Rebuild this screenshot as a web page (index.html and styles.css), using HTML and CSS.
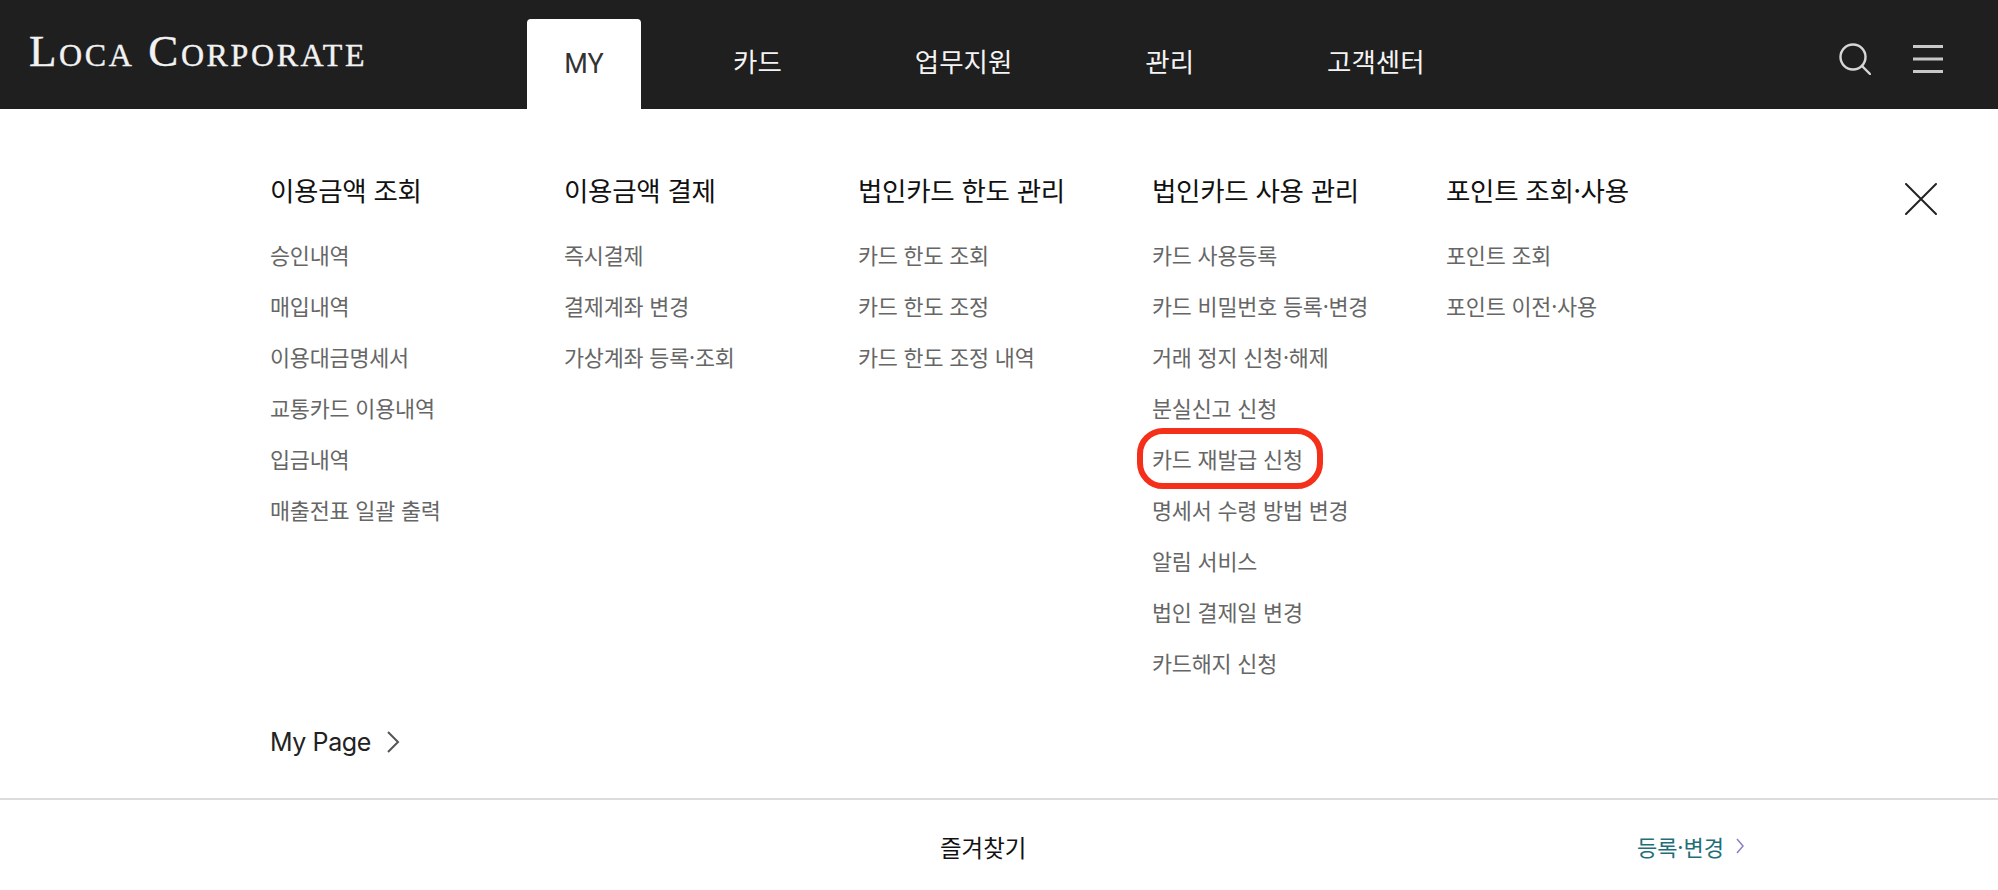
FILE: index.html
```html
<!DOCTYPE html>
<html lang="ko">
<head>
  <meta charset="UTF-8" />
  <meta name="viewport" content="width=device-width, initial-scale=1.0"/>
  <title>Loca Corporate</title>
  <link rel="stylesheet" href="styles.css">
</head>
<body>
  <header class="topbar">
    <div class="logo">Loca Corporate</div>
    <nav class="gnb">
      <a class="gnb-item active" href="#">MY</a>
      <a class="gnb-item" href="#">카드</a>
      <a class="gnb-item" href="#">업무지원</a>
      <a class="gnb-item" href="#">관리</a>
      <a class="gnb-item" href="#">고객센터</a>
    </nav>
    <div class="top-icons">
      <svg class="icon-search" width="32" height="32" viewBox="0 0 32 32" fill="none" stroke="#d6d6d6" stroke-width="2.4" stroke-linecap="round">
        <circle cx="14" cy="14" r="12.5"/>
        <path d="M23 23l8 8"/>
      </svg>
      <svg class="icon-menu" width="30" height="28" viewBox="0 0 30 28" fill="none" stroke="#c8c8c8" stroke-width="3">
        <path d="M0 1.5h30M0 14h30M0 26.5h30"/>
      </svg>
    </div>
  </header>

  <main class="menu">
    <div class="columns">
      <section class="col">
        <h3>이용금액 조회</h3>
        <ul>
          <li>승인내역</li>
          <li>매입내역</li>
          <li>이용대금명세서</li>
          <li>교통카드 이용내역</li>
          <li>입금내역</li>
          <li>매출전표 일괄 출력</li>
        </ul>
      </section>
      <section class="col">
        <h3>이용금액 결제</h3>
        <ul>
          <li>즉시결제</li>
          <li>결제계좌 변경</li>
          <li>가상계좌 등록·조회</li>
        </ul>
      </section>
      <section class="col">
        <h3>법인카드 한도 관리</h3>
        <ul>
          <li>카드 한도 조회</li>
          <li>카드 한도 조정</li>
          <li>카드 한도 조정 내역</li>
        </ul>
      </section>
      <section class="col">
        <h3>법인카드 사용 관리</h3>
        <ul>
          <li>카드 사용등록</li>
          <li>카드 비밀번호 등록·변경</li>
          <li>거래 정지 신청·해제</li>
          <li>분실신고 신청</li>
          <li class="marked">카드 재발급 신청</li>
          <li>명세서 수령 방법 변경</li>
          <li>알림 서비스</li>
          <li>법인 결제일 변경</li>
          <li>카드해지 신청</li>
        </ul>
      </section>
      <section class="col">
        <h3>포인트 조회·사용</h3>
        <ul>
          <li>포인트 조회</li>
          <li>포인트 이전·사용</li>
        </ul>
      </section>
      <svg class="close" width="32" height="32" viewBox="0 0 32 32" fill="none" stroke="#222" stroke-width="2" stroke-linecap="round">
        <path d="M1 1l30 30M31 1L1 31"/>
      </svg>
    </div>

    <a class="mypage" href="#">My Page
      <svg width="13" height="22" viewBox="0 0 13 22" fill="none" stroke="#555" stroke-width="2">
        <path d="M1 1l10 10L1 21"/>
      </svg>
    </a>
  </main>

  <footer class="favorites">
    <div class="fav-title">즐겨찾기</div>
    <a class="fav-edit" href="#">등록·변경
      <svg width="9" height="16" viewBox="0 0 9 16" fill="none" stroke="#8a7fc4" stroke-width="1.5">
        <path d="M1 1l6 7-6 7"/>
      </svg>
    </a>
  </footer>
</body>
</html>
```

FILE: styles.css
```css
:root {
  --dark: #1f1f1f;
  --text: #222;
  --sub: #666;
  --teal: #1f6f78;
  --red: #f5301a;
}

*, *::after {
  margin: 0;
  padding: 0;
  box-sizing: border-box;
}

body {
  font-family: 'Noto Sans CJK KR', 'Noto Sans', sans-serif;
  background: #fff;
  color: var(--text);
  height: 890px;
  overflow: hidden;
}

a {
  color: inherit;
  text-decoration: none;
}

ul {
  list-style: none;
}

.topbar {
  height: 109px;
  background: var(--dark);
  display: flex;
  align-items: flex-end;
  padding: 0 55px 0 29px;
}

.logo {
  align-self: flex-start;
  width: 498px;
  margin-top: 24px;
  font-family: 'Liberation Serif', serif;
  font-variant: small-caps;
  font-size: 45px;
  line-height: 54px;
  letter-spacing: 2.6px;
  -webkit-text-stroke: 0.4px #f2f2f2;
  color: #f2f2f2;
  white-space: nowrap;
}

.gnb {
  display: flex;
  gap: 61px;
  flex: 1;
}

.gnb-item {
  height: 90px;
  padding: 0 36px 7px;
  display: flex;
  align-items: center;
  font-size: 26.5px;
  color: #f4f4f4;
  white-space: nowrap;
}

.gnb-item.active {
  background: #fff;
  color: #333;
  border-radius: 4px 4px 0 0;
  font-family: 'Roboto', sans-serif;
  font-size: 27px;
  width: 114px;
  justify-content: center;
  padding: 0 0 1px;
  margin-right: -5px;
}

.top-icons {
  display: flex;
  align-items: center;
  gap: 42px;
  align-self: flex-start;
  margin-top: 43px;
}

.menu {
  height: 691px;
  padding: 0 0 0 270px;
  display: flex;
  flex-direction: column;
  justify-content: space-between;
  border-bottom: 2px solid #dcdcdc;
}

.columns {
  position: relative;
  display: flex;
  padding-top: 60px;
}

.col {
  width: 294px;
}

.col h3 {
  font-size: 26.5px;
  font-weight: 400;
  line-height: 42px;
  color: #111;
  letter-spacing: -0.3px;
  margin-bottom: 18px;
}

.col li {
  font-size: 21.8px;
  line-height: 51px;
  color: var(--sub);
  letter-spacing: -0.2px;
  white-space: nowrap;
}

.marked {
  position: relative;
}

.marked::after {
  content: "";
  position: absolute;
  left: -15px;
  top: -5px;
  width: 186px;
  height: 61px;
  border: 6px solid var(--red);
  border-radius: 26px;
}

.close {
  position: absolute;
  left: 1635px;
  top: 74px;
}

.mypage {
  display: flex;
  align-items: center;
  gap: 16px;
  font-size: 25px;
  letter-spacing: -0.4px;
  font-family: 'Inter', 'Noto Sans', sans-serif;
  color: var(--text);
  padding-bottom: 41px;
}

.favorites {
  height: 88px;
  padding: 30px 253px 0 940px;
  display: flex;
  justify-content: space-between;
  align-items: flex-start;
}

.fav-title {
  font-size: 23.5px;
  font-weight: 400;
  color: #111;
}

.fav-edit {
  display: flex;
  align-items: center;
  gap: 12px;
  font-size: 22px;
  color: var(--teal);
}
```
